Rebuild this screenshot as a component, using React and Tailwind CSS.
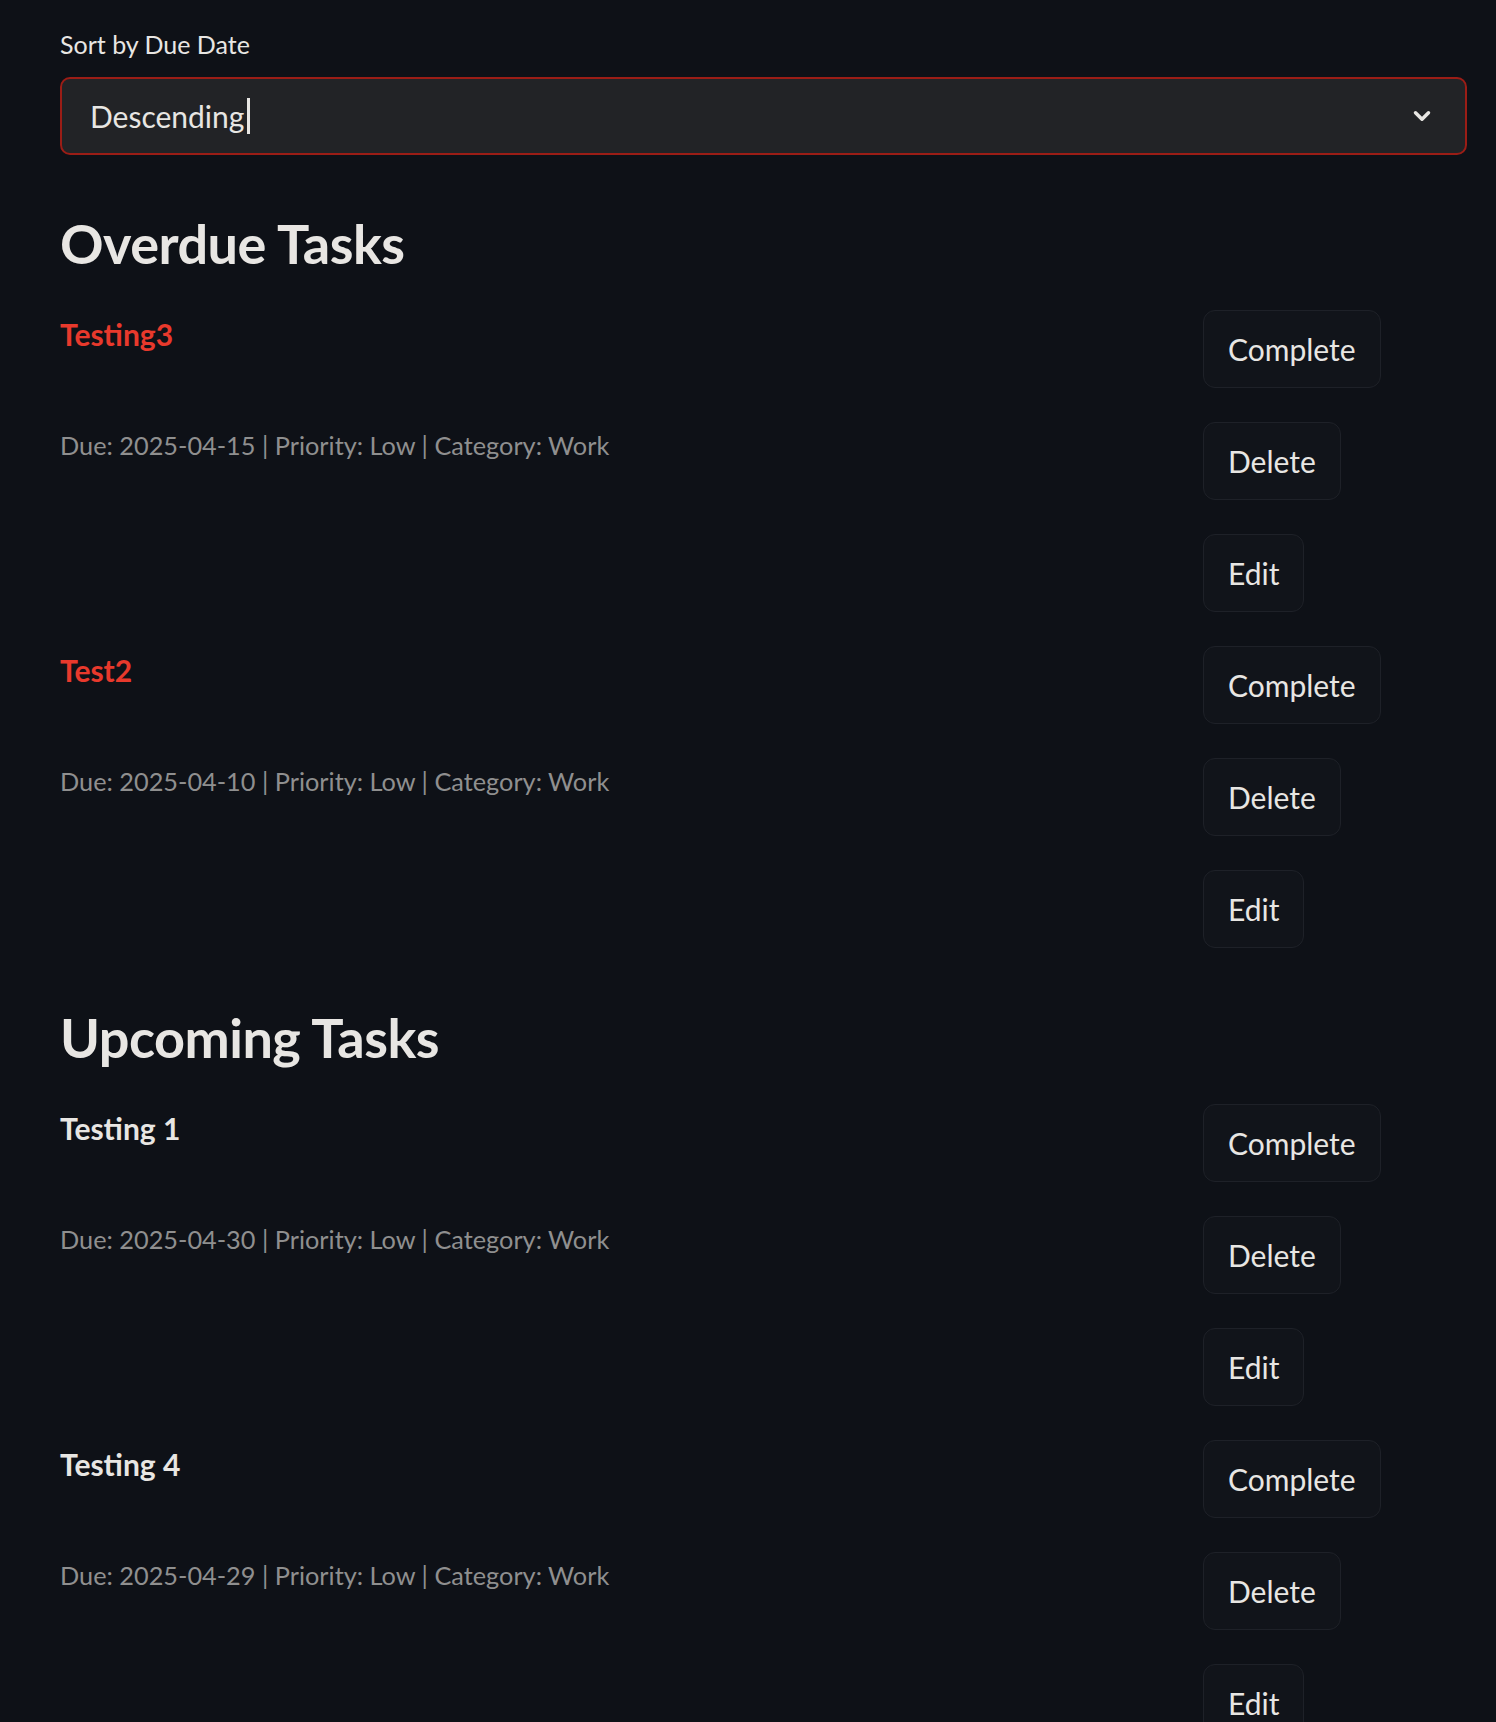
import { ChevronDown } from "lucide-react";

const OVERDUE = [
  { title: "Testing3", due: "2025-04-15", priority: "Low", category: "Work" },
  { title: "Test2", due: "2025-04-10", priority: "Low", category: "Work" },
];

const UPCOMING = [
  { title: "Testing 1", due: "2025-04-30", priority: "Low", category: "Work" },
  { title: "Testing 4", due: "2025-04-29", priority: "Low", category: "Work" },
];

function Btn({ children }) {
  return (
    <button className="h-[78px] self-start px-[24px] rounded-[12px] border border-[#1e2128] bg-[#11141a] text-[30px] text-[#e8e6e3] leading-none">
      {children}
    </button>
  );
}

function TaskRow({ task, overdue }) {
  return (
    <div className="flex">
      <div className="flex-1 flex flex-col">
        <div
          className={`mt-[6px] h-[36px] leading-[36px] text-[30px] font-bold ${
            overdue ? "text-[#e8392c]" : "text-[#e8e6e3]"
          }`}
        >
          {task.title}
        </div>
        <div className="mt-[75px] h-[36px] leading-[36px] text-[25.3px] text-[#8f8f8f]">
          Due: {task.due} | Priority: {task.priority} | Category: {task.category}
        </div>
      </div>
      <div className="w-[264px] flex flex-col gap-[34px]">
        <Btn>Complete</Btn>
        <Btn>Delete</Btn>
        <Btn>Edit</Btn>
      </div>
    </div>
  );
}

function Section({ title, tasks, overdue, first }) {
  return (
    <div className={first ? "mt-[55px]" : "mt-[56px]"}>
      <h2 className="h-[67px] leading-[67px] text-[54px] font-bold text-[#e8e6e3] tracking-[-0.5px]">
        {title}
      </h2>
      <div className="mt-[33px] flex flex-col gap-[34px]">
        {tasks.map((t) => (
          <TaskRow key={t.title} task={t} overdue={overdue} />
        ))}
      </div>
    </div>
  );
}

export default function App() {
  return (
    <div
      className="min-h-screen bg-[#0e1117] pl-[60px] pr-[29px] pt-[28px] pb-[40px]"
      style={{ fontFamily: "Lato, 'Noto Sans', sans-serif" }}
    >
      <label className="block h-[32px] leading-[32px] text-[25px] text-[#e8e6e3]">
        Sort by Due Date
      </label>
      <div className="mt-[17px] h-[78px] rounded-[10px] border-2 border-[#9b1d16] bg-[#222326] flex items-center pl-[28px] pr-[30px]">
        <span className="text-[30px] text-[#e8e6e3]">Descending</span>
        <span className="ml-[3px] w-[3px] h-[36px] bg-[#e8e6e3]" />
        <div className="flex-1" />
        <ChevronDown size={26} strokeWidth={3.2} className="text-[#e8e6e3]" />
      </div>
      <Section title="Overdue Tasks" tasks={OVERDUE} overdue first />
      <Section title="Upcoming Tasks" tasks={UPCOMING} />
    </div>
  );
}
